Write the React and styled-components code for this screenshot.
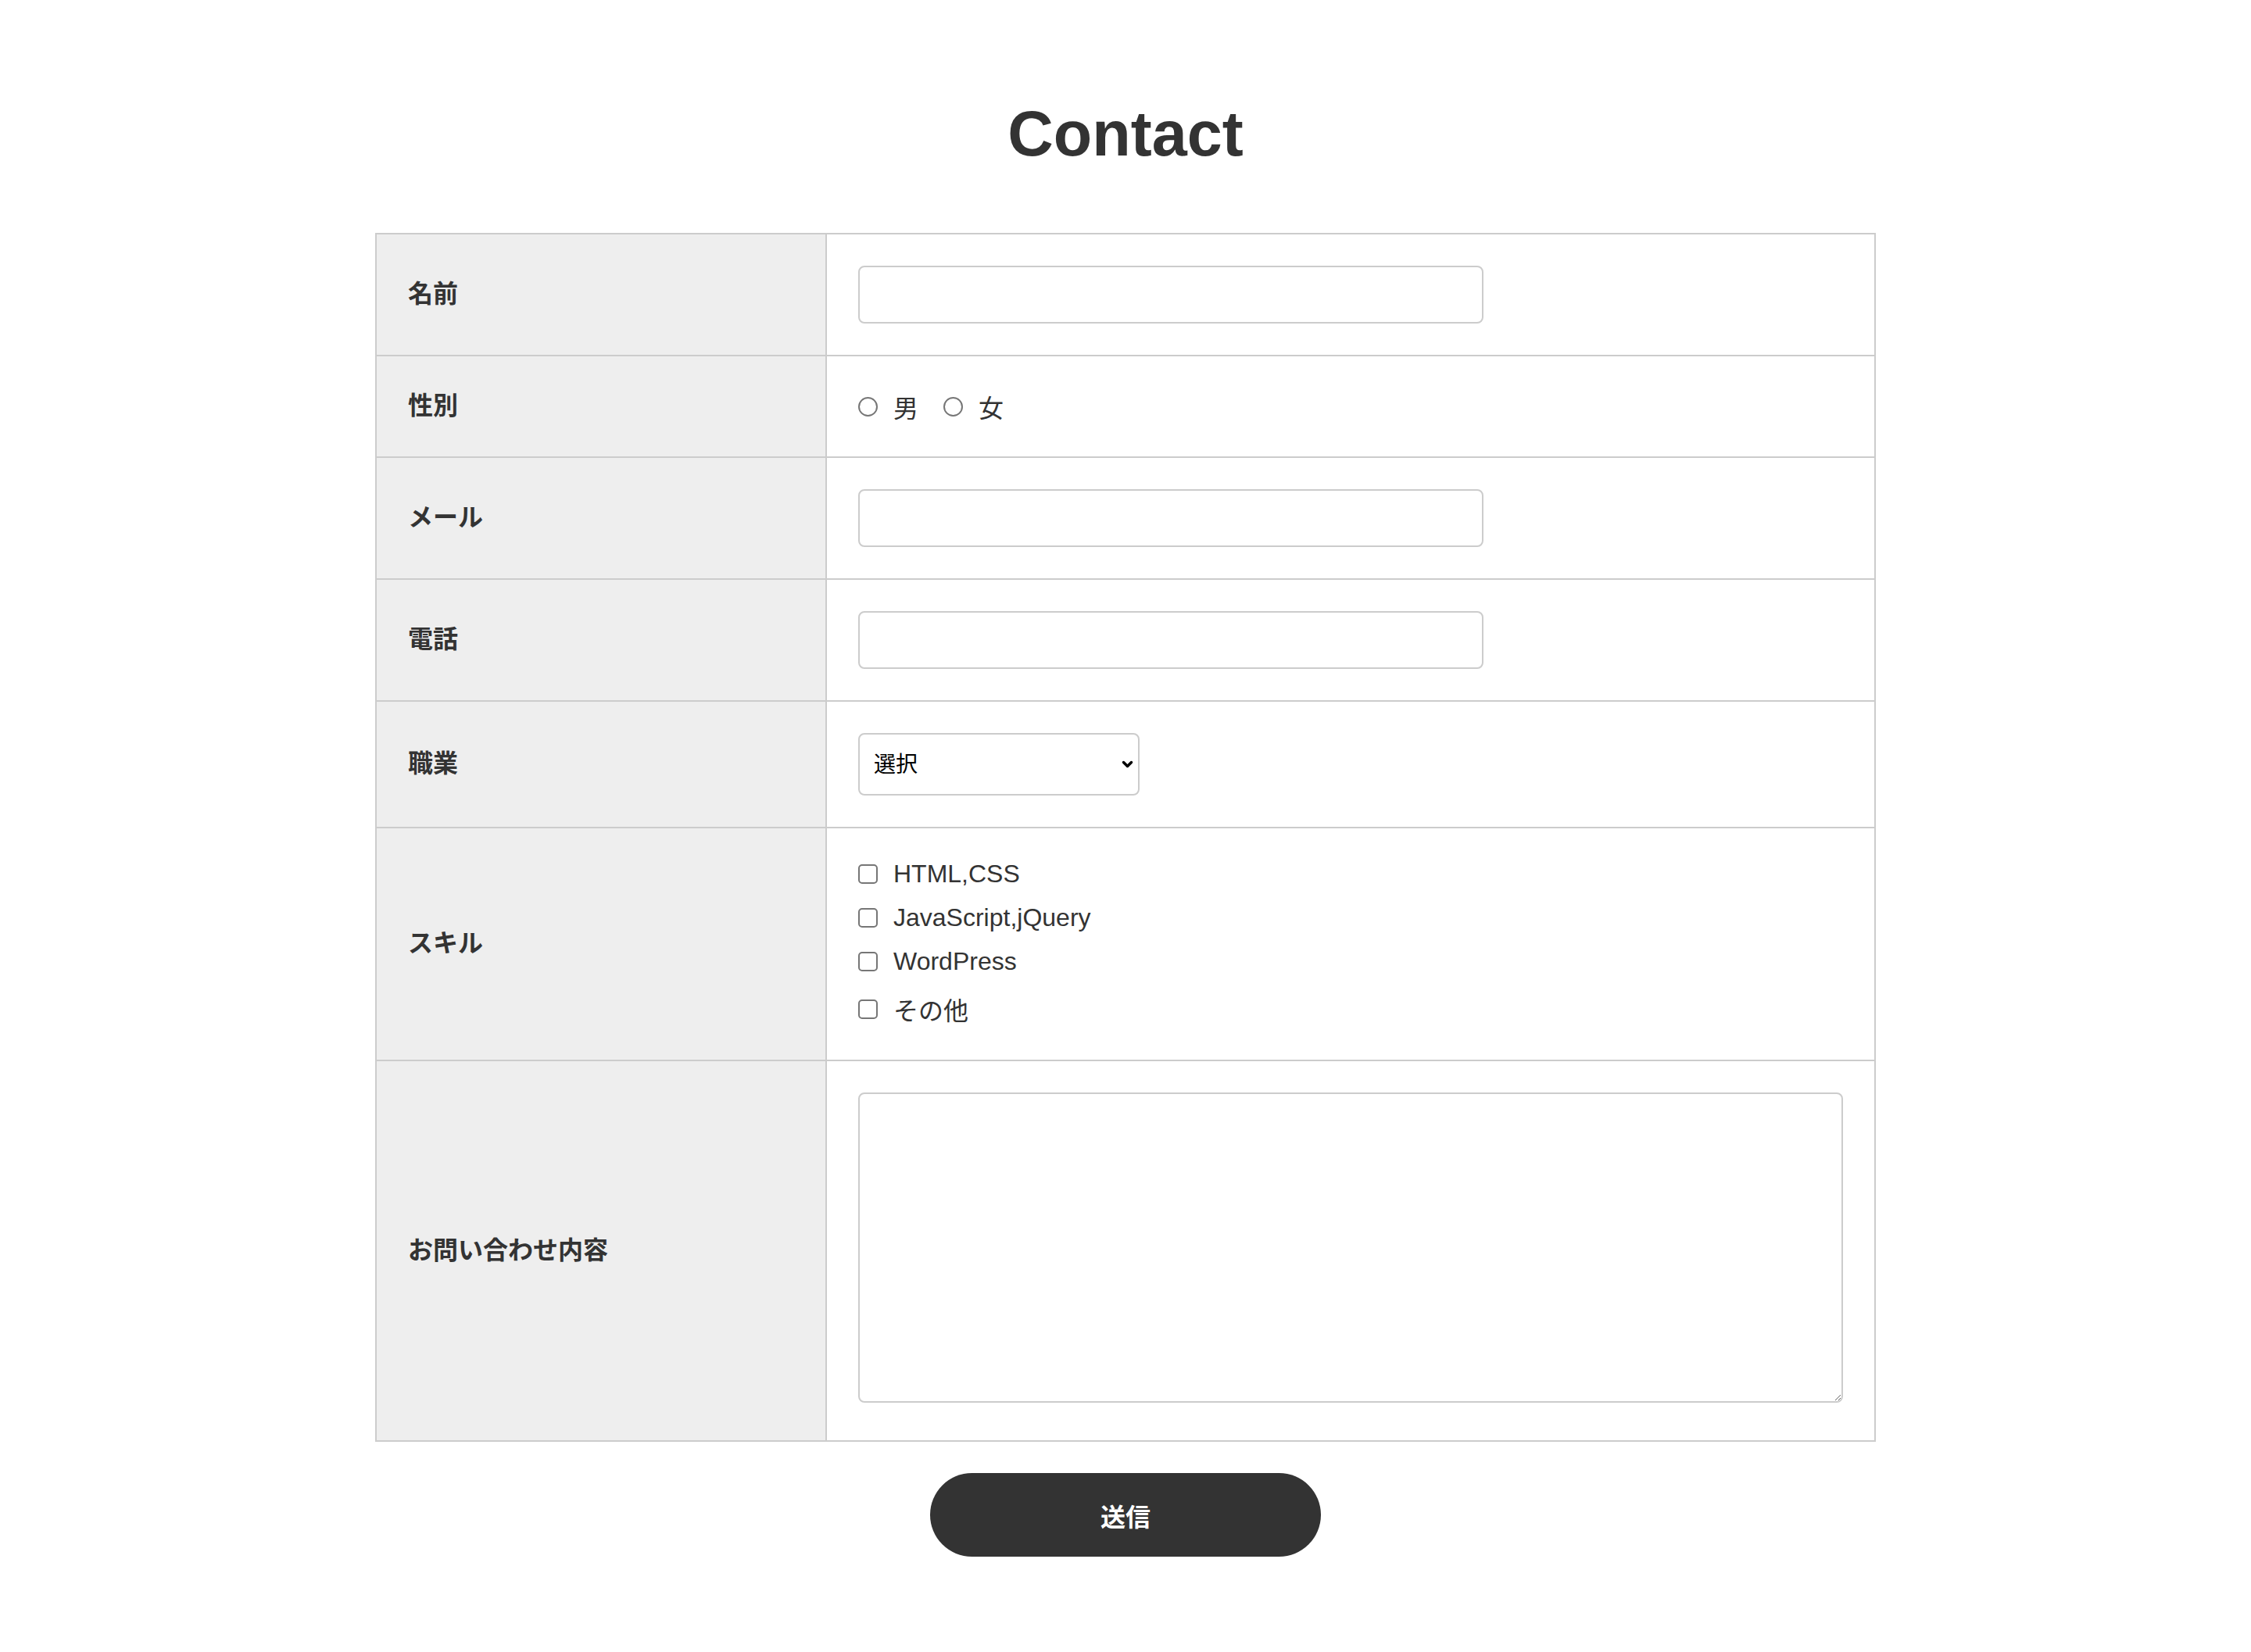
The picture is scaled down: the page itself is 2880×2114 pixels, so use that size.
import React from 'react';
import styled, { createGlobalStyle } from 'styled-components';

// ---------------------------------------------------------------------------
// Global
// ---------------------------------------------------------------------------
const GlobalStyle = createGlobalStyle`
  html, body {
    margin: 0;
    padding: 0;
    background: #fff;
  }

  body {
    color: #333;
    font-family: "Liberation Sans", "Noto Sans CJK JP", sans-serif;
  }

  * {
    box-sizing: border-box;
  }
`;

// ---------------------------------------------------------------------------
// Styled Components
// ---------------------------------------------------------------------------
const Page = styled.div`
  padding: 131px 0 120px;
  min-height: 2114px;
`;

const Title = styled.h1`
  margin: 0 0 87px;
  font-size: 81px;
  line-height: 80px;
  font-weight: 700;
  text-align: center;
  color: #333;
`;

const Form = styled.form`
  width: 1920px;
  margin: 0 auto;
`;

const Table = styled.table`
  width: 100%;
  border-collapse: collapse;
  font-size: 32px;
  color: #333;
`;

const HeadCell = styled.th`
  width: 576px;
  padding: 36px 40px 44px;
  border: 2px solid #ccc;
  background: #eee;
  text-align: left;
  vertical-align: middle;
  font-weight: 700;
  font-size: 32px;
`;

const DataCell = styled.td`
  padding: 40px;
  border: 2px solid #ccc;
  background: #fff;
  vertical-align: middle;
`;

const TextInput = styled.input`
  display: block;
  width: 800px;
  height: 74px;
  padding: 0 16px;
  border: 2px solid #ccc;
  border-radius: 8px;
  font-size: 28px;
  font-family: inherit;
  background: #fff;
`;

const RadioGroup = styled.div`
  display: flex;
  align-items: center;
  height: 48px;
`;

const Choice = styled.label`
  display: flex;
  align-items: center;
  gap: 20px;
  margin-right: ${({ $spaced }) => ($spaced ? '32px' : '0')};
  height: ${({ $tall }) => ($tall ? '46px' : '37px')};
  font-size: 32px;
  color: #333;
`;

const Radio = styled.input.attrs({ type: 'radio' })`
  appearance: none;
  margin: 0;
  width: 25px;
  height: 25px;
  border: 2px solid #767676;
  border-radius: 50%;
  background: #fff;
  flex-shrink: 0;
`;

const Checkbox = styled.input.attrs({ type: 'checkbox' })`
  appearance: none;
  margin: 0;
  width: 25px;
  height: 25px;
  border: 2px solid #767676;
  border-radius: 5px;
  background: #fff;
  flex-shrink: 0;
`;

const SkillList = styled.div`
  display: flex;
  flex-direction: column;
  gap: 19px;
  padding-bottom: 2px;
`;

const SelectWrap = styled.div`
  position: relative;
  width: 360px;
  height: 80px;
`;

const Select = styled.select`
  appearance: none;
  width: 100%;
  height: 100%;
  padding: 0 40px 0 18px;
  border: 2px solid #ccc;
  border-radius: 8px;
  background: #fff;
  font-size: 28px;
  font-family: inherit;
  color: #000;
`;

const Chevron = styled.svg`
  position: absolute;
  right: 8px;
  top: 50%;
  width: 15px;
  height: 11px;
  margin-top: -5px;
  pointer-events: none;
`;

const TextArea = styled.textarea`
  width: 100%;
  height: 397px;
  border: 2px solid #ccc;
  border-radius: 8px;
  font-size: 28px;
  font-family: inherit;
  background: #fff;
`;

const SubmitButton = styled.button`
  display: block;
  width: 500px;
  height: 107px;
  margin: 40px auto 0;
  border: none;
  border-radius: 999px;
  background: #333;
  color: #fff;
  font-size: 32px;
  font-weight: 700;
  font-family: inherit;
  cursor: pointer;
`;

// ---------------------------------------------------------------------------
// Data
// ---------------------------------------------------------------------------
const skills = ['HTML,CSS', 'JavaScript,jQuery', 'WordPress', 'その他'];

const App = () => {
  return (
    <Page>
      <GlobalStyle />
      <Title>Contact</Title>

      <Form onSubmit={(e) => e.preventDefault()}>
        <Table>
          <tbody>
            <tr>
              <HeadCell>名前</HeadCell>
              <DataCell>
                <TextInput type="text" />
              </DataCell>
            </tr>
            <tr>
              <HeadCell>性別</HeadCell>
              <DataCell>
                <RadioGroup>
                  <Choice $spaced>
                    <Radio name="gender" />
                    男
                  </Choice>
                  <Choice>
                    <Radio name="gender" />
                    女
                  </Choice>
                </RadioGroup>
              </DataCell>
            </tr>
            <tr>
              <HeadCell>メール</HeadCell>
              <DataCell>
                <TextInput type="email" />
              </DataCell>
            </tr>
            <tr>
              <HeadCell>電話</HeadCell>
              <DataCell>
                <TextInput type="tel" />
              </DataCell>
            </tr>
            <tr>
              <HeadCell>職業</HeadCell>
              <DataCell>
                <SelectWrap>
                  <Select defaultValue="">
                    <option value="">選択</option>
                  </Select>
                  <Chevron viewBox="0 0 15 11">
                    <polyline
                      points="2.5,2.5 7.5,7.5 12.5,2.5"
                      fill="none"
                      stroke="#000"
                      strokeWidth="3.5"
                      strokeLinecap="round"
                      strokeLinejoin="round"
                    />
                  </Chevron>
                </SelectWrap>
              </DataCell>
            </tr>
            <tr>
              <HeadCell>スキル</HeadCell>
              <DataCell>
                <SkillList>
                  {skills.map((skill, i) => (
                    <Choice key={skill} $tall={i === skills.length - 1}>
                      <Checkbox />
                      {skill}
                    </Choice>
                  ))}
                </SkillList>
              </DataCell>
            </tr>
            <tr>
              <HeadCell>お問い合わせ内容</HeadCell>
              <DataCell>
                <TextArea />
              </DataCell>
            </tr>
          </tbody>
        </Table>

        <SubmitButton type="submit">送信</SubmitButton>
      </Form>
    </Page>
  );
};

export default App;
